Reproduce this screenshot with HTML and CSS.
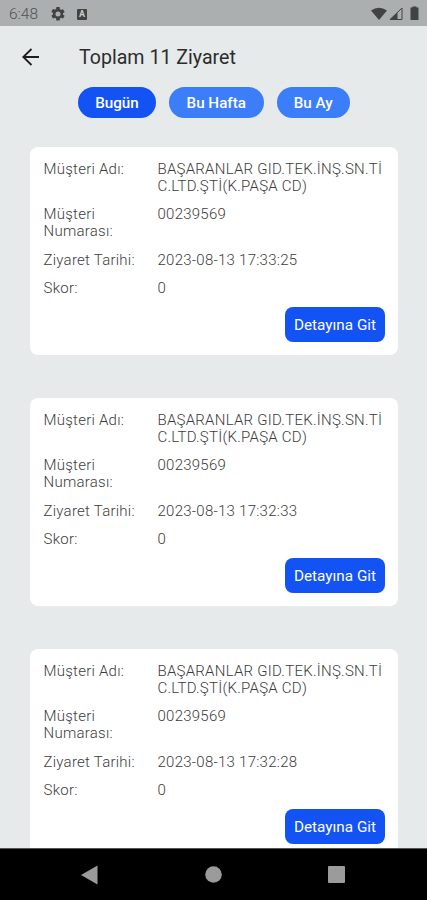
FILE: index.html
```html
<!DOCTYPE html>
<html lang="tr">
<head>
  <meta charset="UTF-8" />
  <meta name="viewport" content="width=device-width, initial-scale=1.0" />
  <title>Ziyaretler</title>
  <link rel="stylesheet" href="styles.css">
</head>
<body>
  <div class="status-bar">
    <span class="clock">6:48</span>
    <svg class="gear" width="14" height="14" viewBox="2 2 20 20">
      <path d="M19.14 12.94c.04-.3.06-.61.06-.94s-.02-.64-.07-.94l2.03-1.58a.49.49 0 0 0 .12-.61l-1.92-3.32a.49.49 0 0 0-.59-.22l-2.39.96c-.5-.38-1.03-.7-1.62-.94l-.36-2.54A.48.48 0 0 0 13.92 2h-3.84a.47.47 0 0 0-.47.41l-.36 2.54c-.59.24-1.13.57-1.62.94l-2.39-.96a.48.48 0 0 0-.59.22L2.74 8.47a.47.47 0 0 0 .12.61l2.03 1.58c-.05.3-.09.63-.09.94s.02.64.07.94l-2.03 1.58a.49.49 0 0 0-.12.61l1.92 3.32c.12.22.37.29.59.22l2.39-.96c.5.38 1.03.7 1.62.94l.36 2.54c.05.24.24.41.48.41h3.84c.24 0 .44-.17.47-.41l.36-2.54c.59-.24 1.13-.56 1.62-.94l2.39.96c.22.08.47 0 .59-.22l1.92-3.32a.47.47 0 0 0-.12-.61zM12 15.6A3.6 3.6 0 1 1 12 8.4a3.6 3.6 0 0 1 0 7.2z" />
    </svg>
    <span class="keyboard-icon">A</span>
    <svg class="signals" width="50" height="16" viewBox="0 0 50 16">
      <path d="M0 4.500Q8 -1 16 4.500L8 14z" />
      <path d="M18.500 14L26.500 6.500V14z" />
      <path d="M19 13.500L31 2V13.500z" fill="none" stroke="#414343" />
      <path d="M41.500 1.500V0.500h4V1.500h2V14H39.500V1.500z" />
    </svg>
  </div>

  <header class="header">
    <svg class="back" width="18" height="18" viewBox="0 0 18 18">
      <path d="M9.500 1L1.300 9L9.500 17M1.300 9H17" />
    </svg>
    <h1>Toplam 11 Ziyaret</h1>
  </header>

  <nav class="filters">
    <button class="chip active">Bugün</button>
    <button class="chip week">Bu Hafta</button>
    <button class="chip month">Bu Ay</button>
  </nav>

  <main class="list">
    <section class="card">
      <dl>
        <dt>Müşteri Adı:</dt>
        <dd>BAŞARANLAR GID.TEK.İNŞ.SN.Tİ<br>C.LTD.ŞTİ(K.PAŞA CD)</dd>
        <dt>Müşteri Numarası:</dt>
        <dd>00239569</dd>
        <dt>Ziyaret Tarihi:</dt>
        <dd>2023-08-13 17:33:25</dd>
        <dt>Skor:</dt>
        <dd>0</dd>
      </dl>
      <button class="detail-btn">Detayına Git</button>
    </section>

    <section class="card">
      <dl>
        <dt>Müşteri Adı:</dt>
        <dd>BAŞARANLAR GID.TEK.İNŞ.SN.Tİ<br>C.LTD.ŞTİ(K.PAŞA CD)</dd>
        <dt>Müşteri Numarası:</dt>
        <dd>00239569</dd>
        <dt>Ziyaret Tarihi:</dt>
        <dd>2023-08-13 17:32:33</dd>
        <dt>Skor:</dt>
        <dd>0</dd>
      </dl>
      <button class="detail-btn">Detayına Git</button>
    </section>

    <section class="card">
      <dl>
        <dt>Müşteri Adı:</dt>
        <dd>BAŞARANLAR GID.TEK.İNŞ.SN.Tİ<br>C.LTD.ŞTİ(K.PAŞA CD)</dd>
        <dt>Müşteri Numarası:</dt>
        <dd>00239569</dd>
        <dt>Ziyaret Tarihi:</dt>
        <dd>2023-08-13 17:32:28</dd>
        <dt>Skor:</dt>
        <dd>0</dd>
      </dl>
      <button class="detail-btn">Detayına Git</button>
    </section>
  </main>

  <footer class="nav-bar">
    <svg width="17" height="20" viewBox="0 0 17 20"><path d="M0 10L16.500 0.500V19.500z" /></svg>
    <svg width="17" height="17" viewBox="0 0 17 17"><circle cx="8.500" cy="8.500" r="8.300" /></svg>
    <svg width="17" height="17" viewBox="0 0 17 17"><rect width="17" height="17" rx="1" /></svg>
  </footer>
</body>
</html>
```
FILE: styles.css
```css
* {
  box-sizing: border-box;
}
html, body {
  margin: 0;
  height: 100%;
}
body {
  display: flex;
  flex-direction: column;
  overflow: hidden;
  background: #e6eaeb;
  font-family: Roboto, "Liberation Sans", sans-serif;
  color: #3c3c3c;
}
button {
  border: none;
  padding: 0;
  font-family: inherit;
  color: #fff;
}
.status-bar {
  flex: none;
  display: flex;
  align-items: center;
  height: 26px;
  padding: 2px 6px 0 9px;
  background: #abafaf;
}
.status-bar svg {
  fill: #414343;
}
.clock {
  width: 42px;
  font-size: 15.5px;
  font-weight: 300;
  color: #505252;
}
.keyboard-icon {
  width: 10px;
  height: 11px;
  margin-left: 12px;
  border-radius: 1px;
  background: #414343;
  color: #c8cccc;
  font-size: 9px;
  font-weight: 700;
  line-height: 11px;
  text-align: center;
}
.signals {
  margin-left: auto;
}
.header {
  flex: none;
  display: flex;
  align-items: center;
  height: 61px;
  padding-left: 22px;
}
.back {
  fill: none;
  stroke: #1d1e1e;
  stroke-width: 1.8;
}
h1 {
  margin: 0 0 0 39px;
  padding-top: 2px;
  font-size: 19.6px;
  font-weight: 400;
  color: #2b2d2d;
}
.filters {
  flex: none;
  display: flex;
  gap: 13px;
  padding-left: 78px;
}
.chip {
  width: 78px;
  height: 31px;
  border-radius: 16px;
  background: #3c7dfa;
  font-size: 15.2px;
  font-weight: 500;
}
.chip.active {
  background: #1352f3;
}
.chip.week {
  width: 94.5px;
}
.chip.month {
  width: 73.5px;
}
.list {
  flex: 1;
  min-height: 0;
  display: flex;
  flex-direction: column;
  gap: 42.5px;
  padding: 28.5px 29px 0 30px;
  overflow: hidden;
}
.card {
  flex: none;
  display: flex;
  flex-direction: column;
  height: 208.5px;
  padding: 14px 13px 13px 13.5px;
  border-radius: 8px;
  background: #fff;
}
dl {
  display: grid;
  grid-template-columns: 100px 1fr;
  gap: 11px 14px;
  margin: 0;
  font-size: 15px;
  font-weight: 300;
  line-height: 17.3px;
  letter-spacing: 0.25px;
}
dd {
  margin: 0;
  white-space: nowrap;
}
.detail-btn {
  align-self: flex-end;
  width: 100px;
  height: 35px;
  margin-top: auto;
  border-radius: 8px;
  background: #1352f3;
  font-size: 15.3px;
}
.nav-bar {
  flex: none;
  display: flex;
  justify-content: space-between;
  align-items: center;
  height: 52px;
  padding: 0 82px 0 81px;
  border-top: 1px solid #555;
  background: #000;
  fill: #9b9b9b;
}
```
